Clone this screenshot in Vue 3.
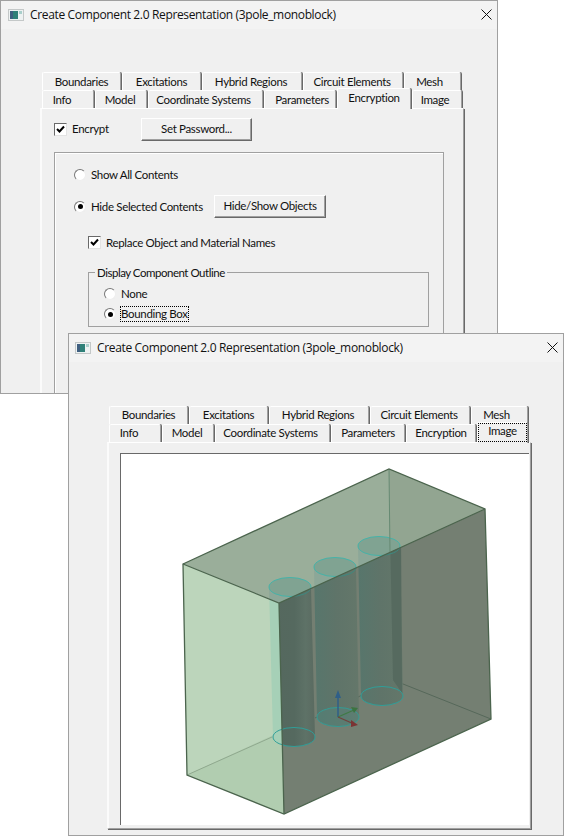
<script setup>
const topTabs = [
  { name: "Boundaries", w: 79 },
  { name: "Excitations", w: 79 },
  { name: "Hybrid Regions", w: 100, nudge: -1 },
  { name: "Circuit Elements", w: 100, nudge: -1 },
  { name: "Mesh", w: 57, nudge: -3 },
];
const encryptTabs = [
  { name: "Info", w: 52, nudge: -6 },
  { name: "Model", w: 52, nudge: -1 },
  { name: "Coordinate Systems", w: 115, nudge: -2 },
  { name: "Parameters", w: 72, nudge: 2 },
  { name: "Encryption", w: 74, active: true },
  { name: "Image", w: 50, nudge: -2 },
];
const imageTabs = [
  { name: "Info", w: 52, nudge: -6 },
  { name: "Model", w: 52, nudge: -1 },
  { name: "Coordinate Systems", w: 115, nudge: -2 },
  { name: "Parameters", w: 74 },
  { name: "Encryption", w: 70 },
  { name: "Image", w: 51, active: true, focus: true },
];
const title = "Create Component 2.0 Representation (3pole_monoblock)";
const cylinders = [
  { top: [290, 587], bottom: [294, 737], fill: "url(#cylOne)" },
  { top: [335, 567], bottom: [338, 717], fill: "url(#cylTwo)" },
  { top: [379, 546], bottom: [382, 696], fill: "url(#cylTwo)" },
];
const bodyPath = (c) =>
  `M${c.top[0] - 21} ${c.top[1]} L${c.bottom[0] - 21} ${c.bottom[1]} A21 9.5 0 0 0 ${c.bottom[0] + 21} ${c.bottom[1]} L${c.top[0] + 21} ${c.top[1]} Z`;
// the labels are not quite centred in the original tabs
const tabStyle = (t) => {
  const nudge = t.nudge || 0;
  return {
    width: t.w + "px",
    paddingLeft: Math.max(nudge, 0) * 2 + "px",
    paddingRight: Math.max(-nudge, 0) * 2 + "px",
  };
};
</script>

<template>
  <div class="desk">
    <section class="win first">
      <header class="titlebar">
        <svg class="appicon" width="16" height="12" viewBox="0 0 16 12">
          <rect width="16" height="12" fill="#c4c8c8" />
          <rect x="1" y="1" width="14" height="10" fill="#eef2f2" />
          <rect x="2" y="2" width="8" height="8" fill="#2f8078" />
          <rect x="2" y="2" width="3" height="8" fill="#3f5f80" />
          <rect x="11" y="2" width="3" height="3" fill="#a9cfcb" />
        </svg>
        <span class="title">{{ title }}</span>
        <svg class="close" width="11" height="11" viewBox="0 0 11 11">
          <path d="M0.5 0.5 L10.5 10.5 M10.5 0.5 L0.5 10.5" stroke="#111" fill="none" />
        </svg>
      </header>
      <div class="content">
        <div class="tabrow">
          <div v-for="t in topTabs" :key="t.name" class="tab" :style="tabStyle(t)">{{ t.name }}</div>
        </div>
        <div class="tabrow">
          <div
            v-for="t in encryptTabs"
            :key="t.name"
            class="tab"
            :class="{ active: t.active }"
            :style="tabStyle(t)"
          >{{ t.name }}</div>
        </div>
        <div class="panel encrypt">
          <div class="row first-row">
            <span class="check">
              <svg width="11" height="11" viewBox="0 0 11 11">
                <path d="M2 5 L4.5 7.5 L9 2.5" fill="none" stroke="#000" stroke-width="2" />
              </svg>
            </span>
            <span class="encrypt-label">Encrypt</span>
            <button class="btn pw">Set Password...</button>
          </div>
          <div class="group">
            <div class="row show">
              <span class="radio"></span>
              <span class="lbl">Show All Contents</span>
            </div>
            <div class="row hide">
              <span class="radio on"></span>
              <span class="hide-label">Hide Selected Contents</span>
              <button class="btn hs">Hide/Show Objects</button>
            </div>
            <div class="row replace">
              <span class="check">
                <svg width="11" height="11" viewBox="0 0 11 11">
                  <path d="M2 5 L4.5 7.5 L9 2.5" fill="none" stroke="#000" stroke-width="2" />
                </svg>
              </span>
              <span class="lbl">Replace Object and Material Names</span>
            </div>
            <fieldset class="outline">
              <legend>Display Component Outline</legend>
              <div class="row opt">
                <span class="radio"></span>
                <span class="lbl">None</span>
              </div>
              <div class="row opt">
                <span class="radio on"></span>
                <span class="focus">Bounding Box</span>
              </div>
            </fieldset>
          </div>
        </div>
      </div>
    </section>

    <section class="win second">
      <header class="titlebar">
        <svg class="appicon" width="16" height="12" viewBox="0 0 16 12">
          <rect width="16" height="12" fill="#c4c8c8" />
          <rect x="1" y="1" width="14" height="10" fill="#eef2f2" />
          <rect x="2" y="2" width="8" height="8" fill="#2f8078" />
          <rect x="2" y="2" width="3" height="8" fill="#3f5f80" />
          <rect x="11" y="2" width="3" height="3" fill="#a9cfcb" />
        </svg>
        <span class="title">{{ title }}</span>
        <svg class="close" width="11" height="11" viewBox="0 0 11 11">
          <path d="M0.5 0.5 L10.5 10.5 M10.5 0.5 L0.5 10.5" stroke="#111" fill="none" />
        </svg>
      </header>
      <div class="content">
        <div class="tabrow">
          <div v-for="t in topTabs" :key="t.name" class="tab" :style="tabStyle(t)">{{ t.name }}</div>
        </div>
        <div class="tabrow">
          <div
            v-for="t in imageTabs"
            :key="t.name"
            class="tab"
            :class="{ active: t.active, dotted: t.focus }"
            :style="tabStyle(t)"
          >{{ t.name }}</div>
        </div>
        <div class="panel picture">
          <div class="viewport">
            <svg width="408" height="371" viewBox="121 454 408 371">
              <defs>
                <linearGradient id="cylOne" x1="0" x2="1" y1="0" y2="0">
                  <stop offset="0" stop-color="#55685e" />
                  <stop offset="0.55" stop-color="#55695f" />
                  <stop offset="0.8" stop-color="#5e7267" />
                  <stop offset="1" stop-color="#5a6a60" />
                </linearGradient>
                <linearGradient id="cylTwo" x1="0" x2="1" y1="0" y2="0">
                  <stop offset="0" stop-color="#57766c" />
                  <stop offset="0.5" stop-color="#5f7469" />
                  <stop offset="1" stop-color="#64776a" />
                </linearGradient>
                <clipPath id="clipLeft"><polygon points="183,564 279,603 284,814 187,775" /></clipPath>
                <clipPath id="clipTop"><polygon points="183,564 389,469 485,509 279,603" /></clipPath>
                <clipPath id="clipRight"><polygon points="279,603 485,509 491,719 284,814" /></clipPath>
              </defs>
              <polygon points="183,564 279,603 284,814 187,775" fill="#bcd5bb" />
              <polygon points="187,775 282,731 284,814" fill="#b1cdb0" />
              <polygon points="183,564 389,469 485,509 279,603" fill="#9aae9a" />
              <polygon points="389,469 485,509 390,553" fill="#92a591" />
              <polygon points="279,603 485,509 491,719 284,814" fill="#747f72" />

              <path d="M187 775 L272 737" stroke="#8fa88e" fill="none" />
              <path d="M315 718 L393 680 L491 719" stroke="#56685a" fill="none" />

              <g clip-path="url(#clipLeft)">
                <path v-for="c in cylinders" :key="c.top[0]" :d="bodyPath(c)" fill="#a6d0b7" />
              </g>
              <g clip-path="url(#clipTop)">
                <path v-for="c in cylinders" :key="c.top[0]" :d="bodyPath(c)" fill="#8ca798" />
                <g fill="#80a392" stroke="#45b3a9">
                  <ellipse v-for="c in cylinders" :key="c.top[0]" :cx="c.top[0]" :cy="c.top[1]" rx="21" ry="9.5" />
                </g>
              </g>
              <g clip-path="url(#clipRight)">
                <path v-for="c in cylinders" :key="c.top[0]" :d="bodyPath(c)" :fill="c.fill" />
                <polygon points="390,530 401,530 402,693 393,680" fill="#566a5f" />
                <g fill="none" stroke="#3d8a80">
                  <ellipse v-for="c in cylinders" :key="c.top[0]" :cx="c.top[0]" :cy="c.top[1]" rx="21" ry="9.5" />
                </g>
              </g>
              <g fill="none" stroke="#2f9f99">
                <ellipse v-for="c in cylinders" :key="c.top[0]" :cx="c.bottom[0]" :cy="c.bottom[1]" rx="21" ry="9.5" />
              </g>
              <ellipse cx="338" cy="717" rx="21" ry="9.5" fill="#4f8f83" fill-opacity="0.3" />

              <path d="M389 469 L390 553" stroke="#668a73" fill="none" />

              <g stroke="#4b644d" fill="none" stroke-width="1.3">
                <polygon points="183,564 389,469 485,509 491,719 284,814 187,775" />
                <path d="M183 564 L279 603 L485 509 M279 603 L284 814" />
              </g>

              <path d="M338 717 L338 695" stroke="#2f5f88" stroke-width="1.5" />
              <polygon points="338,690 335,698 341,698" fill="#2f5f88" />
              <path d="M338 717 L354 710" stroke="#3f7a44" stroke-width="1.2" />
              <polygon points="358,708 351,707 354,713" fill="#3c7440" />
              <path d="M338 717 L354 724" stroke="#71403c" stroke-width="1.2" />
              <polygon points="358,725 351,720 351,727" fill="#7b3434" />
            </svg>
          </div>
        </div>
      </div>
    </section>
  </div>
</template>

<style>
body {
  background: #fff;
}
</style>

<style scoped>
.desk {
  width: 564px;
  height: 836px;
  overflow: hidden;
  font-family: Lato, "Liberation Sans", sans-serif;
  font-size: 11.5px;
  letter-spacing: -0.33px;
  color: #111;
  white-space: nowrap;
}
.win {
  position: absolute;
  box-sizing: border-box;
  background: #f0f0f0;
  border: 1px solid #a0a0a0;
  overflow: hidden;
}
.first {
  left: 0;
  top: 0;
  width: 498px;
  height: 394px;
}
.second {
  left: 68px;
  top: 333px;
  width: 496px;
  height: 503px;
}
.titlebar {
  height: 28px;
  background: #f3f3f3;
  display: flex;
  align-items: center;
  padding: 0 5px 0 7px;
}
.second .titlebar {
  padding-left: 6px;
}
.title {
  margin-left: 6px;
  padding-bottom: 2px;
  font-family: "Open Sans", sans-serif;
  font-size: 12px;
  letter-spacing: -0.35px;
  flex: 1;
}
.close {
  margin-bottom: 2px;
}
.content {
  padding: 44px 0 0 38px;
}
.first .content {
  padding: 43px 0 0 39px;
}
.tabrow {
  display: flex;
  gap: 1px;
  height: 18px;
  margin-left: 2px;
  align-items: flex-start;
}
.tab {
  box-sizing: border-box;
  height: 18px;
  display: flex;
  align-items: center;
  justify-content: center;
  background: #f0f0f0;
  border-top: 1px solid #fff;
  border-left: 1px solid #fff;
  border-right: 1px solid #a0a0a0;
  box-shadow: 1px 0 0 #696969;
  border-radius: 2px 2px 0 0;
  padding-bottom: 1px;
}
.second .tab {
  padding-bottom: 3px;
}
.tab.active {
  position: relative;
  z-index: 1;
  height: 21px;
  margin-top: -2px;
  padding-bottom: 4px;
}
.second .tab.active {
  padding-bottom: 6px;
}
.tab.dotted {
  outline: 1px dotted #000;
  outline-offset: -2px;
}
.panel {
  box-sizing: border-box;
  width: 424px;
  height: 387px;
  background: #f0f0f0;
  border-top: 1px solid #fff;
  border-left: 2px solid #fbfbfb;
  border-right: 1px solid #a0a0a0;
  border-bottom: 1px solid #a0a0a0;
  box-shadow: 1px 1px 0 #696969;
}
.encrypt {
  padding: 9px 0 0 12px;
}
.picture {
  padding: 10px 0 0 11px;
}
.row {
  display: flex;
  align-items: center;
}
.lbl,
.hide-label {
  padding-bottom: 1px;
}
.encrypt-label {
  width: 69px;
  padding-bottom: 3px;
}
.check {
  box-sizing: border-box;
  width: 13px;
  height: 13px;
  flex: none;
  background: #fff;
  border: 1px solid;
  border-color: #696969 #e3e3e3 #e3e3e3 #696969;
  display: flex;
  margin-right: 5px;
}
.btn {
  box-sizing: border-box;
  height: 23px;
  padding: 0 0 3px;
  background: #f0f0f0;
  font: inherit;
  letter-spacing: inherit;
  color: inherit;
  border: 1px solid;
  border-color: #fff #696969 #696969 #fff;
  box-shadow: inset -1px -1px 0 #a0a0a0;
}
.pw {
  width: 111px;
}
.hs {
  width: 112px;
}
.group {
  box-sizing: border-box;
  width: 390px;
  height: 260px;
  margin-top: 11px;
  border: 1px solid #a0a0a0;
  box-shadow: inset 1px 1px 0 #fff;
  padding: 10px 0 0 19px;
}
.show {
  height: 23px;
}
.hide {
  margin-top: 9px;
  height: 23px;
}
.hide-label {
  width: 123px;
}
.radio {
  box-sizing: border-box;
  width: 12px;
  height: 12px;
  flex: none;
  border-radius: 50%;
  background: #fff;
  border: 1px solid;
  border-color: #777 #eee #eee #777;
  margin-right: 5px;
  display: flex;
  align-items: center;
  justify-content: center;
}
.radio.on::after {
  content: "";
  width: 5px;
  height: 5px;
  border-radius: 50%;
  background: #000;
}
.replace {
  height: 13px;
  margin: 18px 0 0 14px;
}
.outline {
  box-sizing: border-box;
  width: 341px;
  margin: 15px 0 0 14px;
  padding: 3px 0 2px 0;
  border: 1px solid #a0a0a0;
  min-inline-size: 0;
}
legend {
  padding: 1px 2px 0;
  margin-left: 6px;
  line-height: 16px;
  letter-spacing: -0.48px;
}
.opt {
  height: 20px;
  padding-left: 15px;
}
.focus {
  border: 1px dotted #000;
  margin-left: -1px;
  line-height: 14px;
}
.viewport {
  box-sizing: border-box;
  width: 409px;
  height: 372px;
  background: #fff;
  border-top: 1px solid #696969;
  border-left: 1px solid #696969;
}
.viewport svg {
  display: block;
}
</style>
